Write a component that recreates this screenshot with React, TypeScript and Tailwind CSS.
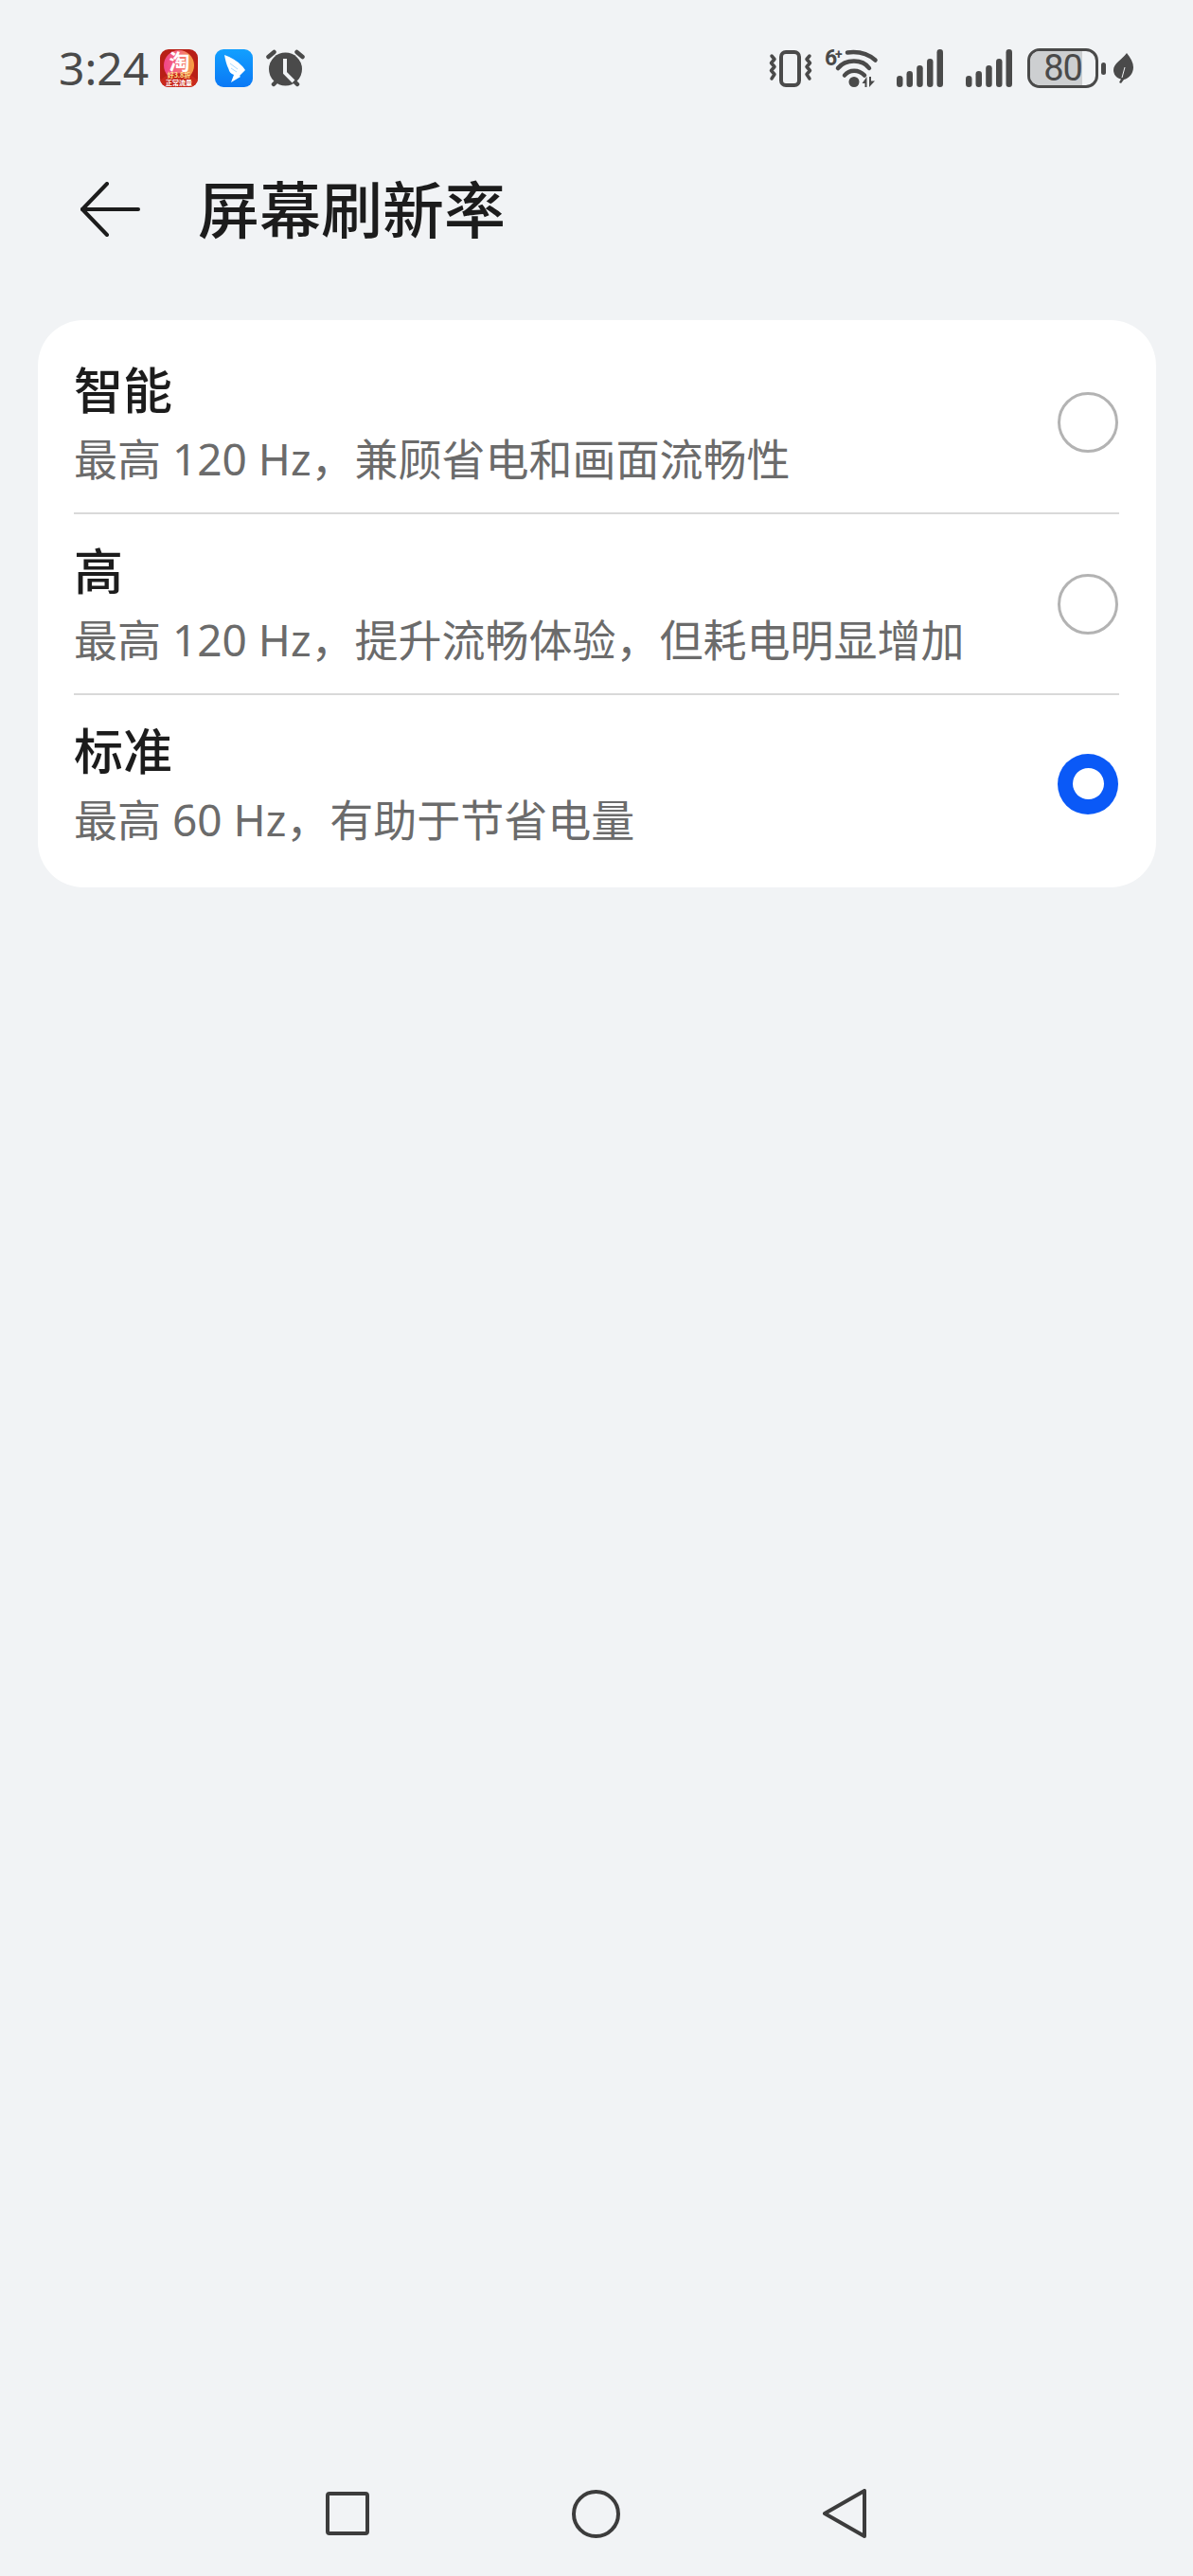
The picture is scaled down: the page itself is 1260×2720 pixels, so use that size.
import React from "react";

const rows = [
  { title: "智能", desc: "最高 120 Hz，兼顾省电和画面流畅性", checked: false, height: "h-[192px]" },
  { title: "高", desc: "最高 120 Hz，提升流畅体验，但耗电明显增加", checked: false, height: "h-[191px]" },
  { title: "标准", desc: "最高 60 Hz，有助于节省电量", checked: true, height: "h-[187px]" },
];

const TaobaoIcon = () => (
  <svg className="overflow-visible" width="40" height="40" viewBox="0 0 40 40">
    <defs>
      <linearGradient id="peach" x1="0" y1="0" x2="1" y2="0">
        <stop offset="0" stopColor="#f2458a" />
        <stop offset="0.55" stopColor="#f5707a" />
        <stop offset="1" stopColor="#f7a23e" />
      </linearGradient>
    </defs>
    <rect width="40" height="40" rx="9" fill="#b81f16" />
    <circle cx="20" cy="17" r="16" fill="url(#peach)" />
    <path d="M5 29C12 24 28 24 35 29L40 33V31A9 9 0 0 1 40 31V31A9 9 0 0 1 31 40H9A9 9 0 0 1 0 31V33z" fill="#c9291c" />
    <text x="20.500" y="21" textAnchor="middle" fontSize="22" fontWeight="700" fill="#fff" fontFamily="'Noto Sans CJK SC', sans-serif">淘</text>
    <text x="20" y="30" textAnchor="middle" fontSize="7" fontWeight="700" fill="#ffe58a" fontFamily="'Noto Sans CJK SC', sans-serif">好3.8折</text>
    <text x="20" y="38" textAnchor="middle" fontSize="7" fontWeight="700" fill="#fff" fontFamily="'Noto Sans CJK SC', sans-serif">正常流量</text>
  </svg>
);

const DingIcon = () => (
  <svg width="40" height="40" viewBox="0 0 40 40">
    <defs>
      <linearGradient id="ding" x1="0" y1="0" x2="0" y2="1">
        <stop offset="0" stopColor="#12a0ff" />
        <stop offset="1" stopColor="#0a78f5" />
      </linearGradient>
    </defs>
    <rect width="40" height="40" rx="9" fill="url(#ding)" />
    <path d="M10 6C18 9 27 14 32 22L26 28L27 29L17 35L20 27C17 26 15 24 14.500 21C12 16 11 11 10 6z" fill="#fff" />
    <path d="M16 15L24 21M17 20L23 24" stroke="#8fd0ff" strokeWidth="0.800" />
  </svg>
);

const AlarmIcon = () => (
  <svg width="41" height="40" viewBox="0 0 41 40">
    <path d="M2.500 8L8.500 3M38.500 8L32.500 3M8 37L11 34M33 37L30 34" stroke="#4a4a4a" strokeWidth="4.500" strokeLinecap="round" />
    <circle cx="20.500" cy="21" r="17.500" fill="#4a4a4a" />
    <path d="M20 10V25L29 34" fill="none" stroke="#f1f3f5" strokeWidth="4" />
  </svg>
);

const VibrateIcon = () => (
  <svg width="46" height="40" viewBox="0 0 46 40" fill="none" stroke="#4a4a4a">
    <rect x="13" y="3" width="19" height="35" rx="5" strokeWidth="4" />
    <path d="M3 7L6 10.500L2.500 14.500L6 18.500L2.500 22.500L6 26.500L3 31" strokeWidth="3.500" strokeLinecap="round" strokeLinejoin="round" />
    <path d="M43 7L40 10.500L43.500 14.500L40 18.500L43.500 22.500L40 26.500L43 31" strokeWidth="3.500" strokeLinecap="round" strokeLinejoin="round" />
  </svg>
);

const WifiIcon = () => (
  <svg className="overflow-visible" width="56" height="40" viewBox="0 0 56 40">
    <text x="0" y="17" fontSize="23" fontWeight="700" fill="#4a4a4a" fontFamily="'Roboto', sans-serif">6</text>
    <text x="11" y="10" fontSize="14" fontWeight="700" fill="#4a4a4a" fontFamily="'Roboto', sans-serif">+</text>
    <path d="M24 3.500C35 2 46 5 53.500 11.500" fill="none" stroke="#4a4a4a" strokeWidth="4.500" strokeLinecap="round" />
    <path d="M14 20C22 10 40 10 47 20" fill="none" stroke="#4a4a4a" strokeWidth="4.500" strokeLinecap="round" />
    <path d="M21 27.500C26 21 36 21 42 27.500" fill="none" stroke="#4a4a4a" strokeWidth="4.500" strokeLinecap="round" />
    <circle cx="31" cy="34.500" r="5.500" fill="#4a4a4a" />
    <path d="M39.500 36L44.500 29V40H42.500V36zM47 29H49V33.500L53 33.500L47 40z" fill="#4a4a4a" />
  </svg>
);

const SignalIcon = () => (
  <svg width="49" height="40" viewBox="0 0 49 40" fill="#4a4a4a">
    <rect x="0" y="28" width="6.500" height="12" rx="3.250" />
    <rect x="10.500" y="23" width="6.500" height="17" rx="3.250" />
    <rect x="21.200" y="17" width="6.500" height="23" rx="3.250" />
    <rect x="32" y="10" width="6.500" height="30" rx="3.250" />
    <rect x="42.500" y="0" width="6.500" height="40" rx="3.250" />
  </svg>
);

const LeafIcon = () => (
  <svg width="21" height="32" viewBox="0 0 21 32">
    <path d="M14 0C18 5 21 10 21 15C21 22 16 27 11 28L8 32L6 31L8 27.500C3 27 0 22 0 18C0 11 9 7 14 0z" fill="#4a4a4a" />
    <path d="M9 26L12 15" stroke="#f1f3f5" strokeWidth="1" />
  </svg>
);

const BackIcon = () => (
  <svg width="63" height="58" viewBox="0 0 63 58" fill="none" stroke="#1c1c1c" strokeWidth="4" strokeLinecap="round" strokeLinejoin="round">
    <path d="M28 2L2 29L28 56" />
    <path d="M2 29H61" />
  </svg>
);

const Radio = ({ checked }: { checked: boolean }) =>
  checked ? (
    <div className="mr-px flex h-16 w-16 shrink-0 items-center justify-center rounded-full bg-[#0a59f7]">
      <div className="h-[33px] w-[33px] rounded-full bg-white" />
    </div>
  ) : (
    <div className="mr-px h-16 w-16 shrink-0 rounded-full border-[3px] border-[#b3b3b3]" />
  );

export default function App() {
  return (
    <div className="flex h-[2720px] w-[1260px] flex-col bg-[#f1f3f5] font-['Noto_Sans','Noto_Sans_CJK_SC',sans-serif]">
      {/* status bar */}
      <div className="mt-[51px] flex h-[42px] items-center justify-between pl-[62px] pr-[63px]">
        <div className="flex items-center">
          <span className="w-[107px] text-[48px] leading-[42px] text-[#4a4a4a]">3:24</span>
          <TaobaoIcon />
          <div className="ml-[18px]"><DingIcon /></div>
          <div className="ml-[14px]"><AlarmIcon /></div>
        </div>
        <div className="flex items-center">
          <VibrateIcon />
          <div className="ml-[13px]"><WifiIcon /></div>
          <div className="ml-[20px]"><SignalIcon /></div>
          <div className="ml-[24px]"><SignalIcon /></div>
          <div className="relative ml-[16px] flex h-[42px] w-[75px] items-center justify-center rounded-[13px] border-[3px] border-[#4a4a4a]">
            <div className="absolute inset-y-0 left-0 w-[55px] rounded-l-[10px] bg-[#cdcfd1]" />
            <span className="relative font-['Roboto',sans-serif] text-[38px] leading-[36px] tracking-[-1px] text-[#4a4a4a]">80</span>
          </div>
          <div className="ml-[3px] h-[13px] w-[5px] rounded-full bg-[#4a4a4a]" />
          <div className="ml-[8px]"><LeafIcon /></div>
        </div>
      </div>

      {/* title */}
      <div className="mt-[72px] flex h-[112px] items-center pl-[85px]">
        <BackIcon />
        <h1 className="ml-[61px] text-[65px] font-medium leading-none text-[#1c1c1c]">屏幕刷新率</h1>
      </div>

      {/* options */}
      <div className="ml-[40px] mr-[39px] mt-[61px] rounded-[48px] bg-white pb-[16px] pl-[38px] pr-[39px] pt-[13px]">
        {rows.map((row, i) => (
          <div
            key={row.title}
            className={`flex items-center justify-between ${row.height} ${i < rows.length - 1 ? "border-b-2 border-[#d9d9d9]" : ""}`}
          >
            <div className="pt-[3px]">
              <div className="text-[52px] font-medium leading-[72px] text-[#1c1c1c]">{row.title}</div>
              <div className="text-[46px] leading-[72px] text-[#6b6b6b]">{row.desc}</div>
            </div>
            <Radio checked={row.checked} />
          </div>
        ))}
      </div>

      {/* nav bar */}
      <div className="mb-[40px] mt-auto flex h-[52px] items-center pl-[344px]">
        <div className="h-[46px] w-[46px] rounded-[4px] border-[4px] border-[#3c3c3c]" />
        <div className="ml-[214px] h-[51px] w-[51px] rounded-full border-[4px] border-[#3c3c3c]" />
        <svg className="ml-[214px]" width="46" height="52" viewBox="0 0 46 52" fill="none" stroke="#3c3c3c" strokeWidth="4" strokeLinejoin="round">
          <path d="M44 2V50L2 26Z" />
        </svg>
      </div>
    </div>
  );
}
